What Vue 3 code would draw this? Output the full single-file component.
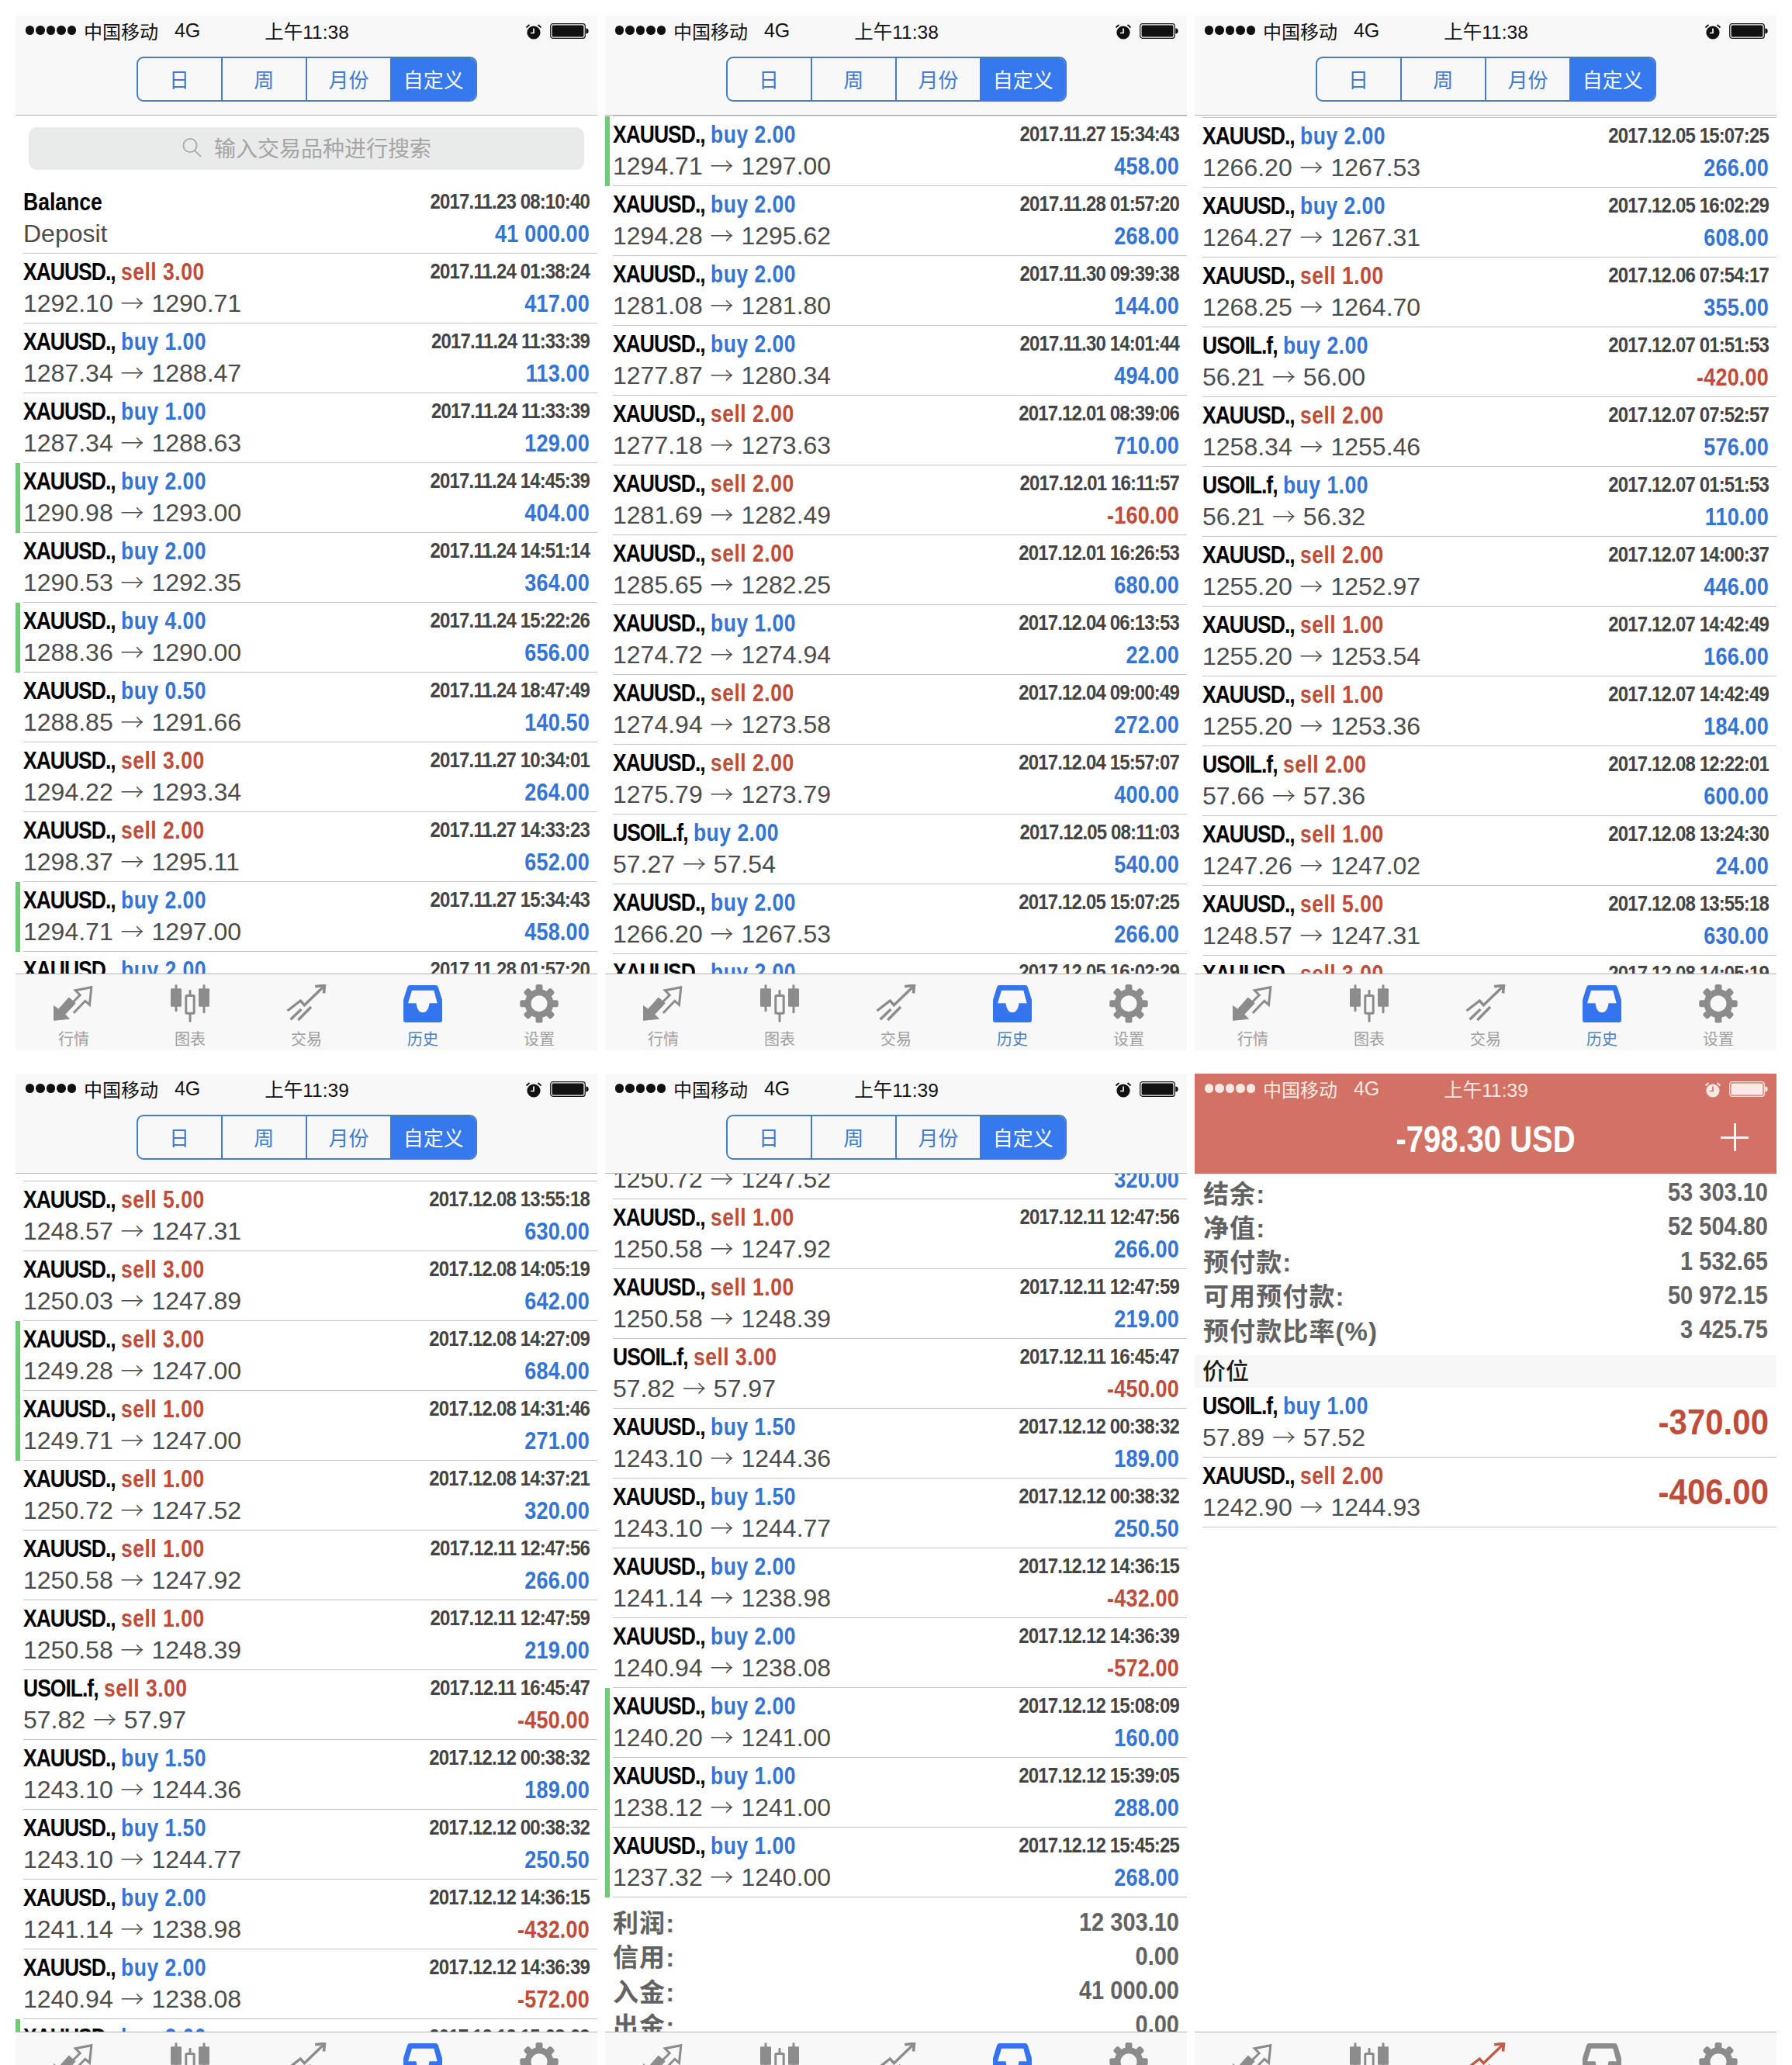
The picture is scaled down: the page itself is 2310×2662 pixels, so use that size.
<script setup>
const X = 'XAUUSD.,'
const U = 'USOIL.f,'
const t = (sym, side, lots, date, from, to, profit, open = false) => ({ sym, side, lots, date, from, to, profit, open })
const trades = [
  t(X,'sell','3.00','2017.11.24 01:38:24','1292.10','1290.71','417.00'),
  t(X,'buy','1.00','2017.11.24 11:33:39','1287.34','1288.47','113.00'),
  t(X,'buy','1.00','2017.11.24 11:33:39','1287.34','1288.63','129.00'),
  t(X,'buy','2.00','2017.11.24 14:45:39','1290.98','1293.00','404.00',true),
  t(X,'buy','2.00','2017.11.24 14:51:14','1290.53','1292.35','364.00'),
  t(X,'buy','4.00','2017.11.24 15:22:26','1288.36','1290.00','656.00',true),
  t(X,'buy','0.50','2017.11.24 18:47:49','1288.85','1291.66','140.50'),
  t(X,'sell','3.00','2017.11.27 10:34:01','1294.22','1293.34','264.00'),
  t(X,'sell','2.00','2017.11.27 14:33:23','1298.37','1295.11','652.00'),
  t(X,'buy','2.00','2017.11.27 15:34:43','1294.71','1297.00','458.00',true),
  t(X,'buy','2.00','2017.11.28 01:57:20','1294.28','1295.62','268.00'),
  t(X,'buy','2.00','2017.11.30 09:39:38','1281.08','1281.80','144.00'),
  t(X,'buy','2.00','2017.11.30 14:01:44','1277.87','1280.34','494.00'),
  t(X,'sell','2.00','2017.12.01 08:39:06','1277.18','1273.63','710.00'),
  t(X,'sell','2.00','2017.12.01 16:11:57','1281.69','1282.49','-160.00'),
  t(X,'sell','2.00','2017.12.01 16:26:53','1285.65','1282.25','680.00'),
  t(X,'buy','1.00','2017.12.04 06:13:53','1274.72','1274.94','22.00'),
  t(X,'sell','2.00','2017.12.04 09:00:49','1274.94','1273.58','272.00'),
  t(X,'sell','2.00','2017.12.04 15:57:07','1275.79','1273.79','400.00'),
  t(U,'buy','2.00','2017.12.05 08:11:03','57.27','57.54','540.00'),
  t(X,'buy','2.00','2017.12.05 15:07:25','1266.20','1267.53','266.00'),
  t(X,'buy','2.00','2017.12.05 16:02:29','1264.27','1267.31','608.00'),
  t(X,'sell','1.00','2017.12.06 07:54:17','1268.25','1264.70','355.00'),
  t(U,'buy','2.00','2017.12.07 01:51:53','56.21','56.00','-420.00'),
  t(X,'sell','2.00','2017.12.07 07:52:57','1258.34','1255.46','576.00'),
  t(U,'buy','1.00','2017.12.07 01:51:53','56.21','56.32','110.00'),
  t(X,'sell','2.00','2017.12.07 14:00:37','1255.20','1252.97','446.00'),
  t(X,'sell','1.00','2017.12.07 14:42:49','1255.20','1253.54','166.00'),
  t(X,'sell','1.00','2017.12.07 14:42:49','1255.20','1253.36','184.00'),
  t(U,'sell','2.00','2017.12.08 12:22:01','57.66','57.36','600.00'),
  t(X,'sell','1.00','2017.12.08 13:24:30','1247.26','1247.02','24.00'),
  t(X,'sell','5.00','2017.12.08 13:55:18','1248.57','1247.31','630.00'),
  t(X,'sell','3.00','2017.12.08 14:05:19','1250.03','1247.89','642.00'),
  t(X,'sell','3.00','2017.12.08 14:27:09','1249.28','1247.00','684.00',true),
  t(X,'sell','1.00','2017.12.08 14:31:46','1249.71','1247.00','271.00',true),
  t(X,'sell','1.00','2017.12.08 14:37:21','1250.72','1247.52','320.00'),
  t(X,'sell','1.00','2017.12.11 12:47:56','1250.58','1247.92','266.00'),
  t(X,'sell','1.00','2017.12.11 12:47:59','1250.58','1248.39','219.00'),
  t(U,'sell','3.00','2017.12.11 16:45:47','57.82','57.97','-450.00'),
  t(X,'buy','1.50','2017.12.12 00:38:32','1243.10','1244.36','189.00'),
  t(X,'buy','1.50','2017.12.12 00:38:32','1243.10','1244.77','250.50'),
  t(X,'buy','2.00','2017.12.12 14:36:15','1241.14','1238.98','-432.00'),
  t(X,'buy','2.00','2017.12.12 14:36:39','1240.94','1238.08','-572.00'),
  t(X,'buy','2.00','2017.12.12 15:08:09','1240.20','1241.00','160.00',true),
  t(X,'buy','1.00','2017.12.12 15:39:05','1238.12','1241.00','288.00',true),
  t(X,'buy','1.00','2017.12.12 15:45:25','1237.32','1240.00','268.00',true)
]
const panels = [
  { time: '11:38', scroll: 0, rows: trades.slice(0, 11), search: true },
  { time: '11:38', scroll: -89, rows: trades.slice(8, 22) },
  { time: '11:38', scroll: -87, rows: trades.slice(19, 33) },
  { time: '11:39', scroll: -80, rows: trades.slice(30, 44) },
  { time: '11:39', scroll: -57, rows: trades.slice(35, 46), totals: true },
  { time: '11:39', scroll: 0, rows: [], account: true }
]
const segments = ['日', '周', '月份', '自定义']
const totals = [['利润:', '12 303.10'], ['信用:', '0.00'], ['入金:', '41 000.00'], ['出金:', '0.00']]
const account = [['结余:', '53 303.10'], ['净值:', '52 504.80'], ['预付款:', '1 532.65'], ['可用预付款:', '50 972.15'], ['预付款比率(%)', '3 425.75']]
const positions = [
  { sym: U, side: 'buy', lots: '1.00', from: '57.89', to: '57.52', profit: '-370.00' },
  { sym: X, side: 'sell', lots: '2.00', from: '1242.90', to: '1244.93', profit: '-406.00' }
]
const tabs = ['行情', '图表', '交易', '历史', '设置']
const gearTeeth = [0, 45, 90, 135, 180, 225, 270, 315]
const activeTab = (p) => (p.account ? 2 : 3)
</script>

<template>
  <div class="page">
    <section v-for="(p, pi) in panels" :key="pi" class="panel">
      <header class="head" :class="{ red: p.account }">
        <div class="status">
          <span class="dots"><i v-for="d in 5" :key="d"></i></span>
          <span class="carrier">中国移动</span>
          <span class="net">4G</span>
          <span class="time">上午{{ p.time }}</span>
          <svg class="alarm" width="22" height="22" viewBox="0 0 22 22">
            <circle cx="11" cy="12" r="8.6" fill="currentColor" />
            <path d="M11 6.5V12.5H7" fill="none" stroke="var(--face)" stroke-width="1.7" />
            <path d="M1.5 5.5 5.5 2M20.5 5.5 16.5 2" fill="none" stroke="currentColor" stroke-width="1.8" />
          </svg>
          <svg class="battery" width="50" height="20" viewBox="0 0 50 20">
            <rect x="0.7" y="0.7" width="44.6" height="18.6" rx="3" fill="none" stroke="currentColor" stroke-width="1.2" />
            <rect x="2.6" y="2.6" width="40.8" height="14.8" rx="1.5" fill="currentColor" />
            <path d="M46.3 6.5c2.4 0 3.4 1.5 3.4 3.5s-1 3.5-3.4 3.5z" fill="currentColor" />
          </svg>
        </div>
        <div v-if="p.account" class="balance">
          <span class="balance-value">-798.30 USD</span>
          <span class="plus"></span>
        </div>
        <div v-else class="segments">
          <span v-for="(s, si) in segments" :key="s" class="segment" :class="{ on: si === 3 }">{{ s }}</span>
        </div>
      </header>

      <div class="list">
        <div class="scroller" :style="{ marginTop: p.scroll + 'px' }">
          <template v-if="p.search">
            <div class="search-wrap">
              <div class="search">
                <svg width="27" height="26" viewBox="0 0 27 26">
                  <circle cx="11" cy="10.5" r="8.6" fill="none" stroke="#a9a9a9" stroke-width="1.8" />
                  <path d="M17 17 25 25" stroke="#a9a9a9" stroke-width="1.8" />
                </svg>
                <span>输入交易品种进行搜索</span>
              </div>
            </div>
            <div class="row">
              <div class="row-in">
                <div class="title"><b class="plain">Balance</b></div>
                <div class="date">2017.11.23 08:10:40</div>
                <div class="sub">Deposit</div>
                <div class="profit">41 000.00</div>
              </div>
            </div>
          </template>

          <div v-for="(r, ri) in p.rows" :key="ri" class="row" :class="{ open: r.open }">
            <div class="row-in">
              <div class="title"><b>{{ r.sym }}</b> <span :class="r.side">{{ r.side }} {{ r.lots }}</span></div>
              <div class="date">{{ r.date }}</div>
              <div class="sub">{{ r.from }} <span class="arrow">→</span> {{ r.to }}</div>
              <div class="profit" :class="{ loss: r.profit[0] === '-' }">{{ r.profit }}</div>
            </div>
          </div>

          <div v-if="p.totals" class="summary totals">
            <div v-for="a in totals" :key="a[0]" class="sum-row"><span>{{ a[0] }}</span><b>{{ a[1] }}</b></div>
          </div>

          <template v-if="p.account">
            <div class="summary">
              <div v-for="a in account" :key="a[0]" class="sum-row"><span>{{ a[0] }}</span><b>{{ a[1] }}</b></div>
            </div>
            <div class="band">价位</div>
            <div v-for="r in positions" :key="r.from" class="row pos">
              <div class="row-in">
                <div class="title"><b>{{ r.sym }}</b> <span :class="r.side">{{ r.side }} {{ r.lots }}</span></div>
                <div class="sub">{{ r.from }} <span class="arrow">→</span> {{ r.to }}</div>
                <div class="big">{{ r.profit }}</div>
              </div>
            </div>
          </template>
        </div>
      </div>

      <nav class="tabs">
        <div v-for="(tab, ti) in tabs" :key="tab" class="tab" :class="{ active: activeTab(p) === ti, alert: p.account && ti === 2 }">
          <svg width="60" height="50" viewBox="0 0 60 50">
            <g v-if="ti === 0">
              <path d="M4.5 46.3V27.7L10.5 32 23.8 17 32.2 24.3 18.8 38.7 24.5 44.3Z" fill="currentColor" stroke="currentColor" stroke-linejoin="round" />
              <path d="M29.8 37 44.8 21.3 50.5 26.3 52.8 3.7 32.2 7.7 38.2 13.7 28.2 23.7" fill="none" stroke="currentColor" stroke-width="3" />
            </g>
            <g v-else-if="ti === 1" fill="currentColor">
              <rect x="5" y="5.3" width="14" height="23.4" rx="1" />
              <rect x="10.5" y="0.3" width="3" height="35" rx="1.2" />
              <rect x="41" y="5.3" width="14" height="23.4" rx="1" />
              <rect x="46.5" y="0.3" width="3" height="37" rx="1.2" />
              <rect x="28.5" y="7" width="3" height="41.7" rx="1.2" />
              <rect x="24.8" y="14.5" width="10.4" height="22.7" fill="var(--bar)" stroke="currentColor" stroke-width="3" rx="1" />
            </g>
            <g v-else-if="ti === 2" fill="none" stroke="currentColor" stroke-width="3.4">
              <path d="M5.6 34 22.3 21 27.4 26.7 51.4 3.5" />
              <path d="M41.2 2.7 53.5 1.2 52.5 11.5" stroke-width="3.6" />
              <path d="M9.6 45.3 23.4 32M19.3 46 36 29" />
            </g>
            <path v-else-if="ti === 3" fill="currentColor" fill-rule="evenodd" d="M13 1H47q2 0 3 3L55 20V46q0 3-3 3H8q-3 0-3-3V20L10 4q1-3 3-3ZM16 7.7H44.3L48.7 24.3H38.5c-1 8-4 12-8.5 12s-7.5-4-8.5-12H11Z" />
            <g v-else fill="currentColor">
              <circle cx="30" cy="24.7" r="14.5" fill="none" stroke="currentColor" stroke-width="8" />
              <rect v-for="a in gearTeeth" :key="a" x="25.5" y="0" width="9" height="10" rx="2.5" :transform="`rotate(${a} 30 24.7)`" />
            </g>
          </svg>
          <span>{{ tab }}</span>
        </div>
      </nav>
    </section>
  </div>
</template>

<style scoped>
.page {
  width: 2310px;
  height: 2662px;
  box-sizing: border-box;
  padding: 20px 20px 0;
  overflow: hidden;
  background: #fff;
  display: grid;
  grid-template-columns: repeat(3, 750px);
  grid-auto-rows: 1334px;
  column-gap: 10px;
  row-gap: 30px;
  font-family: "Liberation Sans", "Noto Sans CJK SC", sans-serif;
  color: #000;
}
.panel {
  display: flex;
  flex-direction: column;
  height: 1334px;
  background: #fff;
}
.head {
  --face: #f8f8f8;
  height: 129px;
  box-sizing: border-box;
  flex: none;
  background: #f8f8f8;
  border-bottom: 1px solid #b4b4b4;
  color: #111;
}
.head.red {
  --face: #d17265;
  background: #d17265;
  border-bottom: 0;
  color: #fff;
}
.status {
  height: 38px;
  margin-bottom: 2px;
  display: flex;
  align-items: center;
  padding: 0 11px 0 13px;
  font-size: 24px;
}
.dots { display: flex; gap: 2px; }
.dots i { width: 11.4px; height: 11.4px; border-radius: 50%; background: currentColor; }
.head.red .status, .head.red .dots { color: #fbe9e6; }
.carrier { margin-left: 10px; }
.net { margin-left: 21px; font-size: 25px; }
.time { margin-left: 83px; font-size: 24.5px; }
.alarm { margin-left: auto; margin-right: 10px; margin-top: 4px; }
.battery { margin-top: 2px; }
.segments {
  margin: 15px auto 0;
  width: 439px;
  height: 58px;
  box-sizing: border-box;
  display: flex;
  border: 2px solid #4a7cbd;
  border-radius: 9px;
  overflow: hidden;
}
.segment {
  flex: 1;
  display: flex;
  align-items: center;
  justify-content: center;
  padding-bottom: 2px;
  font-size: 26px;
  color: #3d7bd6;
  border-left: 2px solid #4a7cbd;
}
.segment:first-child { border-left: 0; }
.segment.on { background: #3678ee; border-left-color: #3678ee; color: #fff; }
.balance {
  position: relative;
  height: 89px;
  display: flex;
  align-items: center;
  justify-content: center;
  box-sizing: border-box;
}
.balance-value { display: inline-block; font-size: 40px; font-weight: 700; transform: scaleY(1.2); }
.plus {
  position: absolute;
  right: 36px;
  top: 24px;
  width: 36px;
  height: 36px;
  background:
    linear-gradient(#fff, #fff) center / 100% 3px no-repeat,
    linear-gradient(#fff, #fff) center / 3px 100% no-repeat;
}
.list { flex: 1; min-height: 0; overflow: hidden; }
.search-wrap { height: 88px; box-sizing: border-box; padding: 15px 17px 0; }
.search {
  height: 55px;
  border-radius: 11px;
  background: #e9eaea;
  display: flex;
  align-items: center;
  justify-content: center;
  gap: 15px;
  padding-bottom: 3px;
  box-sizing: border-box;
  color: #a5a5a5;
  font-size: 28px;
}
.row {
  height: 90px;
  box-sizing: border-box;
  border-left: 6px solid transparent;
  padding-left: 4px;
}
.row.open { border-left-color: #72c975; }
.row-in {
  height: 90px;
  box-sizing: border-box;
  padding: 0 10px 7px 0;
  border-bottom: 1px solid #c4c4c4;
  display: grid;
  grid-template-columns: 1fr auto;
  grid-template-rows: 46px 36px;
  align-items: center;
}
.title { font-size: 26.5px; line-height: 45px; white-space: nowrap; }
.title b, .title span { display: inline-block; transform: scaleY(1.19); font-weight: 700; }
.title b { letter-spacing: -1px; }
.title b.plain { letter-spacing: 0; }
.title span { letter-spacing: 0.5px; }
.buy { color: #3474d4; }
.sell { color: #c04b38; }
.date {
  font-size: 24px;
  font-weight: 700;
  letter-spacing: -0.85px;
  color: #444;
  justify-self: end;
  transform: scaleY(1.14);
}
.sub { font-size: 32px; line-height: 36px; color: #4c4c4c; white-space: nowrap; }
.arrow {
  display: inline-block;
  width: 32px;
  text-align: center;
  font-family: "Noto Sans CJK SC", sans-serif;
  font-weight: 300;
  font-size: 30px;
  line-height: 30px;
}
.profit {
  font-size: 27px;
  line-height: 36px;
  font-weight: 700;
  letter-spacing: 0.2px;
  color: #3474d4;
  justify-self: end;
  transform: scaleY(1.17);
}
.profit.loss { color: #c04b38; }
.pos .title, .pos .sub { grid-column: 1; }
.big {
  grid-column: 2;
  grid-row: 1 / span 2;
  padding-top: 5px;
  font-size: 42px;
  font-weight: 700;
  color: #c04b38;
  transform: scaleY(1.12);
}
.summary { padding: 1.5px 11px 0 11px; }
.summary.totals { padding-top: 9px; padding-left: 10px; padding-right: 10px; }
.sum-row {
  height: 44.25px;
  display: flex;
  justify-content: space-between;
  align-items: center;
  font-size: 33px;
  color: #626262;
}
.sum-row span { font-weight: 700; letter-spacing: 1.1px; }
.sum-row b { display: inline-block; font-size: 29px; font-weight: 700; transform: scaleY(1.17); }
.band {
  margin-top: 11.5px;
  height: 42px;
  line-height: 42px;
  padding-left: 10px;
  background: #f7f7f7;
  font-size: 30px;
  font-weight: 500;
  color: #1c1c1c;
}
.tabs {
  --bar: #f8f8f8;
  flex: none;
  height: 99px;
  box-sizing: border-box;
  border-top: 1px solid #b4b4b4;
  background: #f8f8f8;
  display: flex;
  padding-top: 13px;
}
.tab {
  flex: 1;
  display: flex;
  flex-direction: column;
  align-items: center;
  color: #8c8c8c;
}
.tab span { font-size: 20px; line-height: 24px; margin-top: 9px; color: #9e9e9e; }
.tab.active { color: #3474ee; }
.tab.active span { color: #4a80c4; }
.tab.alert { color: #c25a47; }
.panel:last-child .tab:nth-child(4) { color: #8c8c8c; }
</style>

<style>
html, body { margin: 0; background: #fff; }
</style>
